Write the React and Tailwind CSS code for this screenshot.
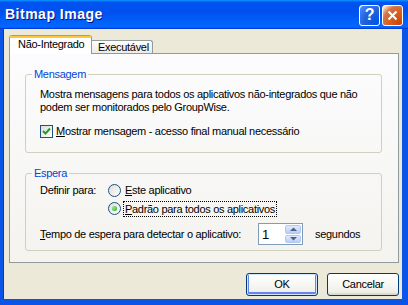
import React from 'react';

const Checkbox = ({ checked }) => (
  <span className="w-[13px] h-[13px] border border-[#1c5180] bg-[linear-gradient(135deg,#dcdcd7,#ffffff)] flex items-center justify-center shrink-0">
    {checked && (
      <svg width="9" height="9" viewBox="0 0 9 9">
        <path d="M1 4 L3.5 6.5 L8 1.5" stroke="#21a121" strokeWidth="2" fill="none" />
      </svg>
    )}
  </span>
);

const Radio = ({ checked }) => (
  <span className="w-[13px] h-[13px] rounded-full border border-[#1c5180] bg-[linear-gradient(135deg,#dcdcd7,#ffffff)] flex items-center justify-center shrink-0">
    {checked && <span className="w-[5px] h-[5px] rounded-full bg-[radial-gradient(circle_at_35%_35%,#8ef08e,#21a121)]" />}
  </span>
);

const Btn = ({ children, primary }) => (
  <button
    className={`w-[72px] h-[23px] rounded-[3px] border border-[#003c74] bg-[linear-gradient(180deg,#ffffff,#f0f0ea_85%,#d6d0c5)] flex items-center justify-center leading-[13px] ${
      primary ? 'shadow-[inset_0_0_0_1px_#cee7ff,inset_0_-1px_0_2px_#6982ee]' : ''
    }`}
  >
    {children}
  </button>
);

const TitleBar = () => (
  <div className="h-[29px] shrink-0 flex items-center pl-[5px] pr-[5px] bg-[linear-gradient(180deg,#0997ff,#0053ee_8%,#0050ee_40%,#0066ff_88%,#0066ff_93%,#005bff_95%,#003dd7_96%,#003dd7)]">
    <span className="text-white font-bold text-[14px] tracking-[0.5px] [text-shadow:1px_1px_#0f1089]">Bitmap Image</span>
    <div className="ml-auto flex gap-[2px] mt-[1px]">
      <div className="w-[21px] h-[21px] rounded-[3px] border border-white bg-[radial-gradient(circle_at_90%_90%,#0054e9_0%,#2263d5_55%,#4483ff_90%,#ffffff_100%)] flex items-center justify-center">
        <span className="text-white font-bold text-[16px] leading-none">?</span>
      </div>
      <div className="w-[21px] h-[21px] rounded-[3px] border border-white bg-[radial-gradient(circle_at_90%_90%,#cc4600_0%,#dc6527_55%,#cd7546_70%,#ffccb2_90%,#ffffff_100%)] flex items-center justify-center">
        <svg width="11" height="11" viewBox="0 0 11 11">
          <path d="M1.5 1.5 L9.5 9.5 M9.5 1.5 L1.5 9.5" stroke="#ffffff" strokeWidth="2" />
        </svg>
      </div>
    </div>
  </div>
);

export default function App() {
  return (
    <div className="w-[408px] h-[305px] bg-[#0a55e6] flex flex-col overflow-hidden font-['Liberation_Sans',sans-serif] text-[11px] tracking-[-0.3px] text-black leading-[13px]">
      <TitleBar />
      <div className="flex-1 ml-[3px] mr-[6px] mb-[6px] bg-[#ece9d8] flex flex-col pl-[5px] pt-[6px] border-l border-[#0831d9]">
        <div className="flex items-end h-[18px]">
          <div className="relative z-10 h-[19px] -mb-px w-[83px] bg-white border-x border-[#919b9c] rounded-t-[3px] overflow-hidden flex flex-col">
            <div className="h-[1px] bg-[#e68b2c]" />
            <div className="h-[2px] bg-[#ffc73c]" />
            <span className="pl-[8px] leading-[13px]">Não-Integrado</span>
          </div>
          <div className="h-[13px] w-[61px] border-t border-r border-[#919b9c] rounded-tr-[3px] bg-[linear-gradient(180deg,#ffffff,#ecebe6)] pl-[6px] leading-[12px]">
            Executável
          </div>
        </div>
        <div className="w-[390px] h-[210px] border border-[#919b9c] bg-[linear-gradient(180deg,#fcfcfe,#f4f3ee)] pt-[14px] pl-[15px] pr-[16px]">
          <fieldset className="border border-[#d0d0bf] rounded-[3px] pl-[6px] pb-[14px]">
            <legend className="px-[2px] text-[#0046d5] leading-[13px]">Mensagem</legend>
            <div className="pl-[8px]">
              <p className="pt-[7px]">
                Mostra mensagens para todos os aplicativos não-integrados que não
                <br />
                podem ser monitorados pelo GroupWise.
              </p>
              <div className="mt-[11px] flex items-center h-[13px]">
                <Checkbox checked />
                <span className="ml-[3px]">
                  <span className="underline">M</span>ostrar mensagem - acesso final manual necessário
                </span>
              </div>
            </div>
          </fieldset>
          <fieldset className="mt-[14px] border border-[#d0d0bf] rounded-[3px] pl-[6px] pb-[5px]">
            <legend className="px-[2px] text-[#0046d5] leading-[13px]">Espera</legend>
            <div className="pl-[8px]">
              <div className="pt-[4px] flex items-center h-[17px]">
                <span className="w-[68px]">Definir para:</span>
                <Radio />
                <span className="ml-[4px]">
                  <span className="underline">E</span>ste aplicativo
                </span>
              </div>
              <div className="mt-[3px] flex items-center h-[17px] pl-[68px]">
                <Radio checked />
                <span className="ml-[2px] px-[1px] border border-dotted border-black leading-[14px]">
                  <span className="underline">P</span>adrão para todos os aplicativos
                </span>
              </div>
              <div className="mt-[6px] flex items-center h-[22px]">
                <span className="w-[218px]">
                  <span className="underline">T</span>empo de espera para detectar o aplicativo:
                </span>
                <div className="w-[45px] h-[22px] border border-[#7f9db9] bg-white flex items-center">
                  <span className="flex-1 pl-[3px] text-[13px]">1</span>
                  <div className="w-[16px] h-[18px] mr-[1px] flex flex-col gap-px">
                    <div className="flex-1 rounded-[2px] bg-[linear-gradient(180deg,#e0eafe,#b9cdf6)] border border-[#b4c8f6] flex items-center justify-center">
                      <svg width="7" height="4" viewBox="0 0 7 4"><path d="M0 4 L3.5 0.5 L7 4Z" fill="#4d6185" /></svg>
                    </div>
                    <div className="flex-1 rounded-[2px] bg-[linear-gradient(180deg,#e0eafe,#b9cdf6)] border border-[#b4c8f6] flex items-center justify-center">
                      <svg width="7" height="4" viewBox="0 0 7 4"><path d="M0 0 L3.5 3.5 L7 0Z" fill="#4d6185" /></svg>
                    </div>
                  </div>
                </div>
                <span className="ml-[12px]">segundos</span>
              </div>
            </div>
          </fieldset>
        </div>
        <div className="mt-[10px] w-[390px] flex justify-end gap-[9px]">
          <Btn primary>OK</Btn>
          <Btn>Cancelar</Btn>
        </div>
      </div>
    </div>
  );
}
